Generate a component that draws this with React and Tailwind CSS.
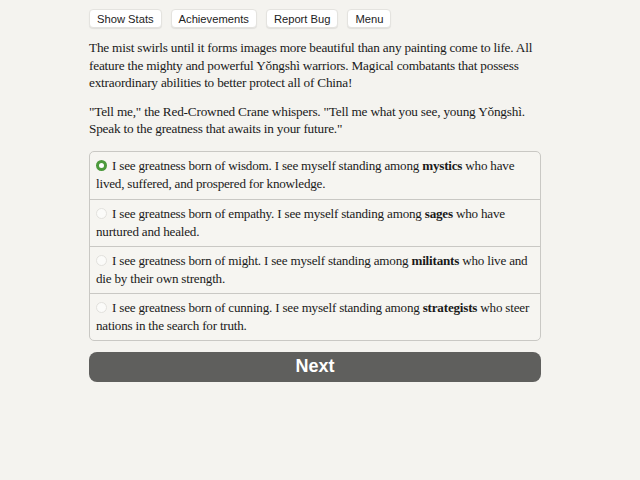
import { useState } from "react";

const choices = [
  { id: "wisdom", lead: "I see greatness born of wisdom. I see myself standing among ", bold: "mystics", tail: " who have lived, suffered, and prospered for knowledge." },
  { id: "empathy", lead: "I see greatness born of empathy. I see myself standing among ", bold: "sages", tail: " who have nurtured and healed." },
  { id: "might", lead: "I see greatness born of might. I see myself standing among ", bold: "militants", tail: " who live and die by their own strength." },
  { id: "cunning", lead: "I see greatness born of cunning. I see myself standing among ", bold: "strategists", tail: " who steer nations in the search for truth." },
];

const topButtons = ["Show Stats", "Achievements", "Report Bug", "Menu"];

const Radio = ({ checked }) => (
  <span
    className={`inline-block align-[-1px] mr-[5px] h-[11px] w-[11px] rounded-full ${
      checked
        ? "border-[3px] border-[#4c9a3c] bg-white"
        : "border border-[#e2e1dd] bg-[#fbfbf9]"
    }`}
  />
);

const App = () => {
  const [selected, setSelected] = useState("wisdom");

  return (
    <div className="min-h-[480px] bg-[#f4f3ef] text-[#1a1a1a]">
      <div className="w-[452px] ml-[89px] pt-[9px]">
        {/* header buttons */}
        <div className="flex gap-[9px] font-['Liberation_Sans',Arial,sans-serif] text-[11.2px]">
          {topButtons.map((label) => (
            <button
              key={label}
              className="h-[19px] px-[7px] leading-[19px] bg-white rounded-[4px] border border-[#e4e3df] shadow-[0_1px_1px_rgba(0,0,0,0.08)] text-[#222]"
            >
              {label}
            </button>
          ))}
        </div>

        <div className="font-['Liberation_Serif','Times_New_Roman',serif] tracking-[-0.2px]">
          <div className="text-[13.25px] leading-[17.5px]">
            <p className="mt-[11px]">
              The mist swirls until it forms images more beautiful than any painting come to life. All
              feature the mighty and powerful Yǒngshì warriors. Magical combatants that possess
              extraordinary abilities to better protect all of China!
            </p>
            <p className="mt-[11px]">
              "Tell me," the Red-Crowned Crane whispers. "Tell me what you see, young Yǒngshì.
              Speak to the greatness that awaits in your future."
            </p>
          </div>

          {/* choice list */}
          <div className="mt-[13px] rounded-[5px] border border-[#c9c8c4] bg-[#f6f5f1] overflow-hidden text-[13.1px]">
            {choices.map((c, i) => (
              <div
                key={c.id}
                onClick={() => setSelected(c.id)}
                className={`h-[47px] pl-[6px] pr-[3px] pt-[5px] leading-[18px] cursor-pointer ${
                  i > 0 ? "border-t border-[#c9c8c4]" : ""
                }`}
              >
                <Radio checked={selected === c.id} />
                {c.lead}
                <b>{c.bold}</b>
                {c.tail}
              </div>
            ))}
          </div>
        </div>

        <button className="mt-[11px] w-full h-[30px] rounded-[8px] bg-[#5f5f5d] text-white font-bold text-[18px] font-['Liberation_Sans',Arial,sans-serif]">
          Next
        </button>
      </div>
    </div>
  );
};

export default App;
